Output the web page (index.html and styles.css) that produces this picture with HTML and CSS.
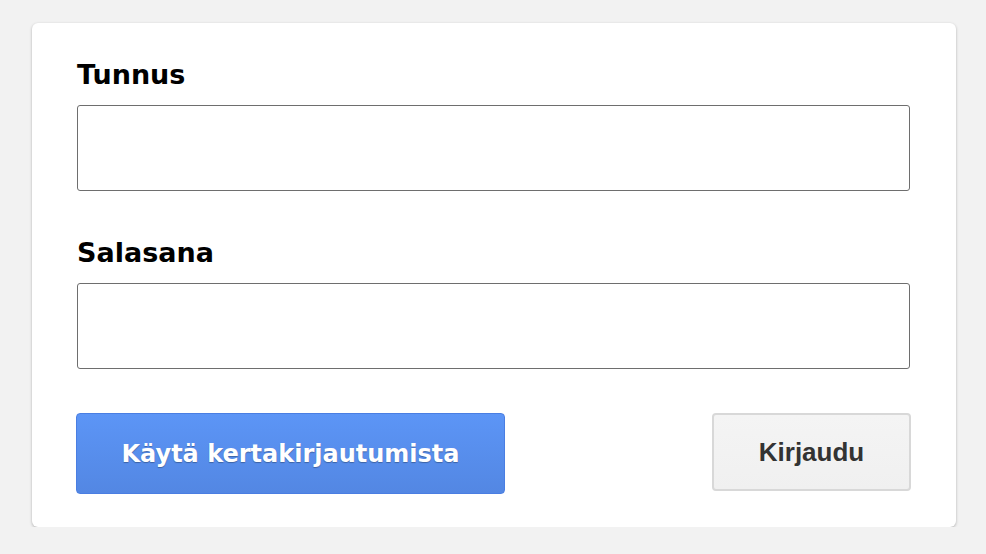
FILE: index.html
```html
<!DOCTYPE html>
<html lang="fi">
<head>
<meta charset="utf-8">
<title>Kirjaudu</title>
<link rel="stylesheet" href="styles.css">
</head>
<body>
<form class="card">
  <label class="label" for="user">Tunnus</label>
  <input class="field" id="user" type="text">
  <label class="label label-second" for="pass">Salasana</label>
  <input class="field" id="pass" type="password">
  <div class="actions">
    <button type="button" class="btn btn-primary">Käytä kertakirjautumista</button>
    <button type="submit" class="btn btn-secondary">Kirjaudu</button>
  </div>
</form>
</body>
</html>
```
FILE: styles.css
```css
html, body {
  margin: 0;
  padding: 0;
  background: #f2f2f2;
}
body {
  padding: 23px 30px 0 32px;
  font-family: "DejaVu Sans", Verdana, sans-serif;
}
.card {
  box-sizing: border-box;
  width: 924px;
  height: 504px;
  background: #fff;
  border-radius: 6px;
  box-shadow: 0 1px 3px rgba(0, 0, 0, 0.28);
  padding: 35px 45px 0 45px;
  display: flex;
  flex-direction: column;
}
.label {
  display: block;
  font-weight: bold;
  font-size: 27px;
  line-height: 34px;
  color: #000;
  margin-bottom: 13px;
}
.label-second {
  margin-top: 45px;
}
.field {
  box-sizing: border-box;
  display: block;
  width: 833px;
  height: 86px;
  margin: 0;
  border: 1px solid #6e6e6e;
  border-radius: 3px;
  background: #fff;
  font-size: 24px;
  padding: 0 12px;
}
.actions {
  display: flex;
  justify-content: space-between;
  align-items: flex-start;
  margin-top: 44px;
}
.btn {
  box-sizing: border-box;
  margin: 0;
  cursor: pointer;
  font-weight: bold;
  border-radius: 4px;
}
.btn-primary {
  margin-left: -1px;
  width: 429px;
  height: 81px;
  border: 1px solid #4a7ee2;
  background: linear-gradient(#5c95f6, #5387e3);
  color: #fff;
  font-family: "DejaVu Sans", Verdana, sans-serif;
  font-size: 24px;
  text-shadow: 0 1px 1px rgba(0, 0, 0, 0.3);
}
.btn-secondary {
  width: 199px;
  height: 78px;
  border: 2px solid #d8d8d8;
  background: linear-gradient(#f4f4f4, #f0f0f0);
  color: #333;
  font-family: "Liberation Sans", Arial, sans-serif;
  font-size: 26px;
}
```
